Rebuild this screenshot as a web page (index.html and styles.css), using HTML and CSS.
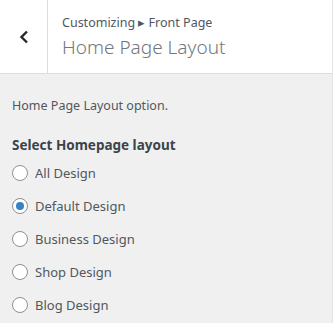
FILE: index.html
```html
<html>

<head>
  <meta charset="UTF-8">
  <title>Home Page Layout</title>
  <link rel="stylesheet" href="styles.css">
</head>

<body>
  <div id="panel">
    <div class="panel-header">
      <button class="back-btn" aria-label="Back">
        <svg width="20" height="20" viewBox="0 0 20 20">
          <path d="M13 4.5 L7.5 10 L13 15.5" fill="none" stroke="#23282d" stroke-width="2.4" />
        </svg>
      </button>
      <div class="panel-title">
        <span class="crumb">Customizing &#9656; Front Page</span>
        <h3>Home Page Layout</h3>
      </div>
    </div>

    <div class="panel-body">
      <p class="description">Home Page Layout option.</p>
      <h4>Select Homepage layout</h4>
      <ul class="choices">
        <li><label><input type="radio" name="layout" value="all"> All Design</label></li>
        <li><label><input type="radio" name="layout" value="default" checked> Default Design</label></li>
        <li><label><input type="radio" name="layout" value="business"> Business Design</label></li>
        <li><label><input type="radio" name="layout" value="shop"> Shop Design</label></li>
        <li><label><input type="radio" name="layout" value="blog"> Blog Design</label></li>
      </ul>
    </div>
  </div>
</body>

</html>
```

FILE: styles.css
```css
* {
  font-family: 'Noto Sans', 'Open Sans', sans-serif;
  box-sizing: border-box;
}

body {
  margin: 0;
  background-color: #f0f0f1;
}

#panel {
  width: 333px;
  height: 323px;
  border-right: 1px solid #e2e4e7;
}

.panel-header {
  display: flex;
  height: 74px;
  background-color: #fff;
  border-bottom: 1px solid #dcdcde;
}

.back-btn {
  width: 48px;
  padding: 0;
  display: flex;
  align-items: center;
  justify-content: center;
  background: none;
  border: none;
  border-right: 1px solid #dcdcde;
}

.panel-title {
  display: flex;
  flex-direction: column;
  justify-content: center;
  padding-left: 14px;
}

.crumb {
  font-size: 12.5px;
  color: #50575e;
  line-height: 18px;
}

.panel-title h3 {
  margin: 2px 0 0 0;
  font-size: 19px;
  font-weight: 300;
  color: #72777c;
  line-height: 26px;
}

.panel-body {
  padding: 23px 12px 0 12px;
}

.description {
  margin: 0 0 22px 0;
  font-size: 12.5px;
  color: #50575e;
}

.panel-body h4 {
  margin: 0 0 2px 0;
  font-size: 13.5px;
  font-weight: bold;
  color: #3c434a;
}

.choices {
  list-style: none;
  margin: 0;
  padding: 0;
}

.choices li {
  height: 33px;
  display: flex;
  align-items: center;
}

.choices label {
  display: flex;
  align-items: center;
  gap: 7px;
  font-size: 13px;
  color: #50575e;
}

.choices input {
  appearance: none;
  margin: 0;
  width: 16px;
  height: 16px;
  border: 1px solid #8c8f94;
  border-radius: 50%;
  background-color: #fff;
  display: flex;
  align-items: center;
  justify-content: center;
}

.choices input:checked::before {
  content: "";
  width: 8px;
  height: 8px;
  border-radius: 50%;
  background-color: #3582c4;
}
```
